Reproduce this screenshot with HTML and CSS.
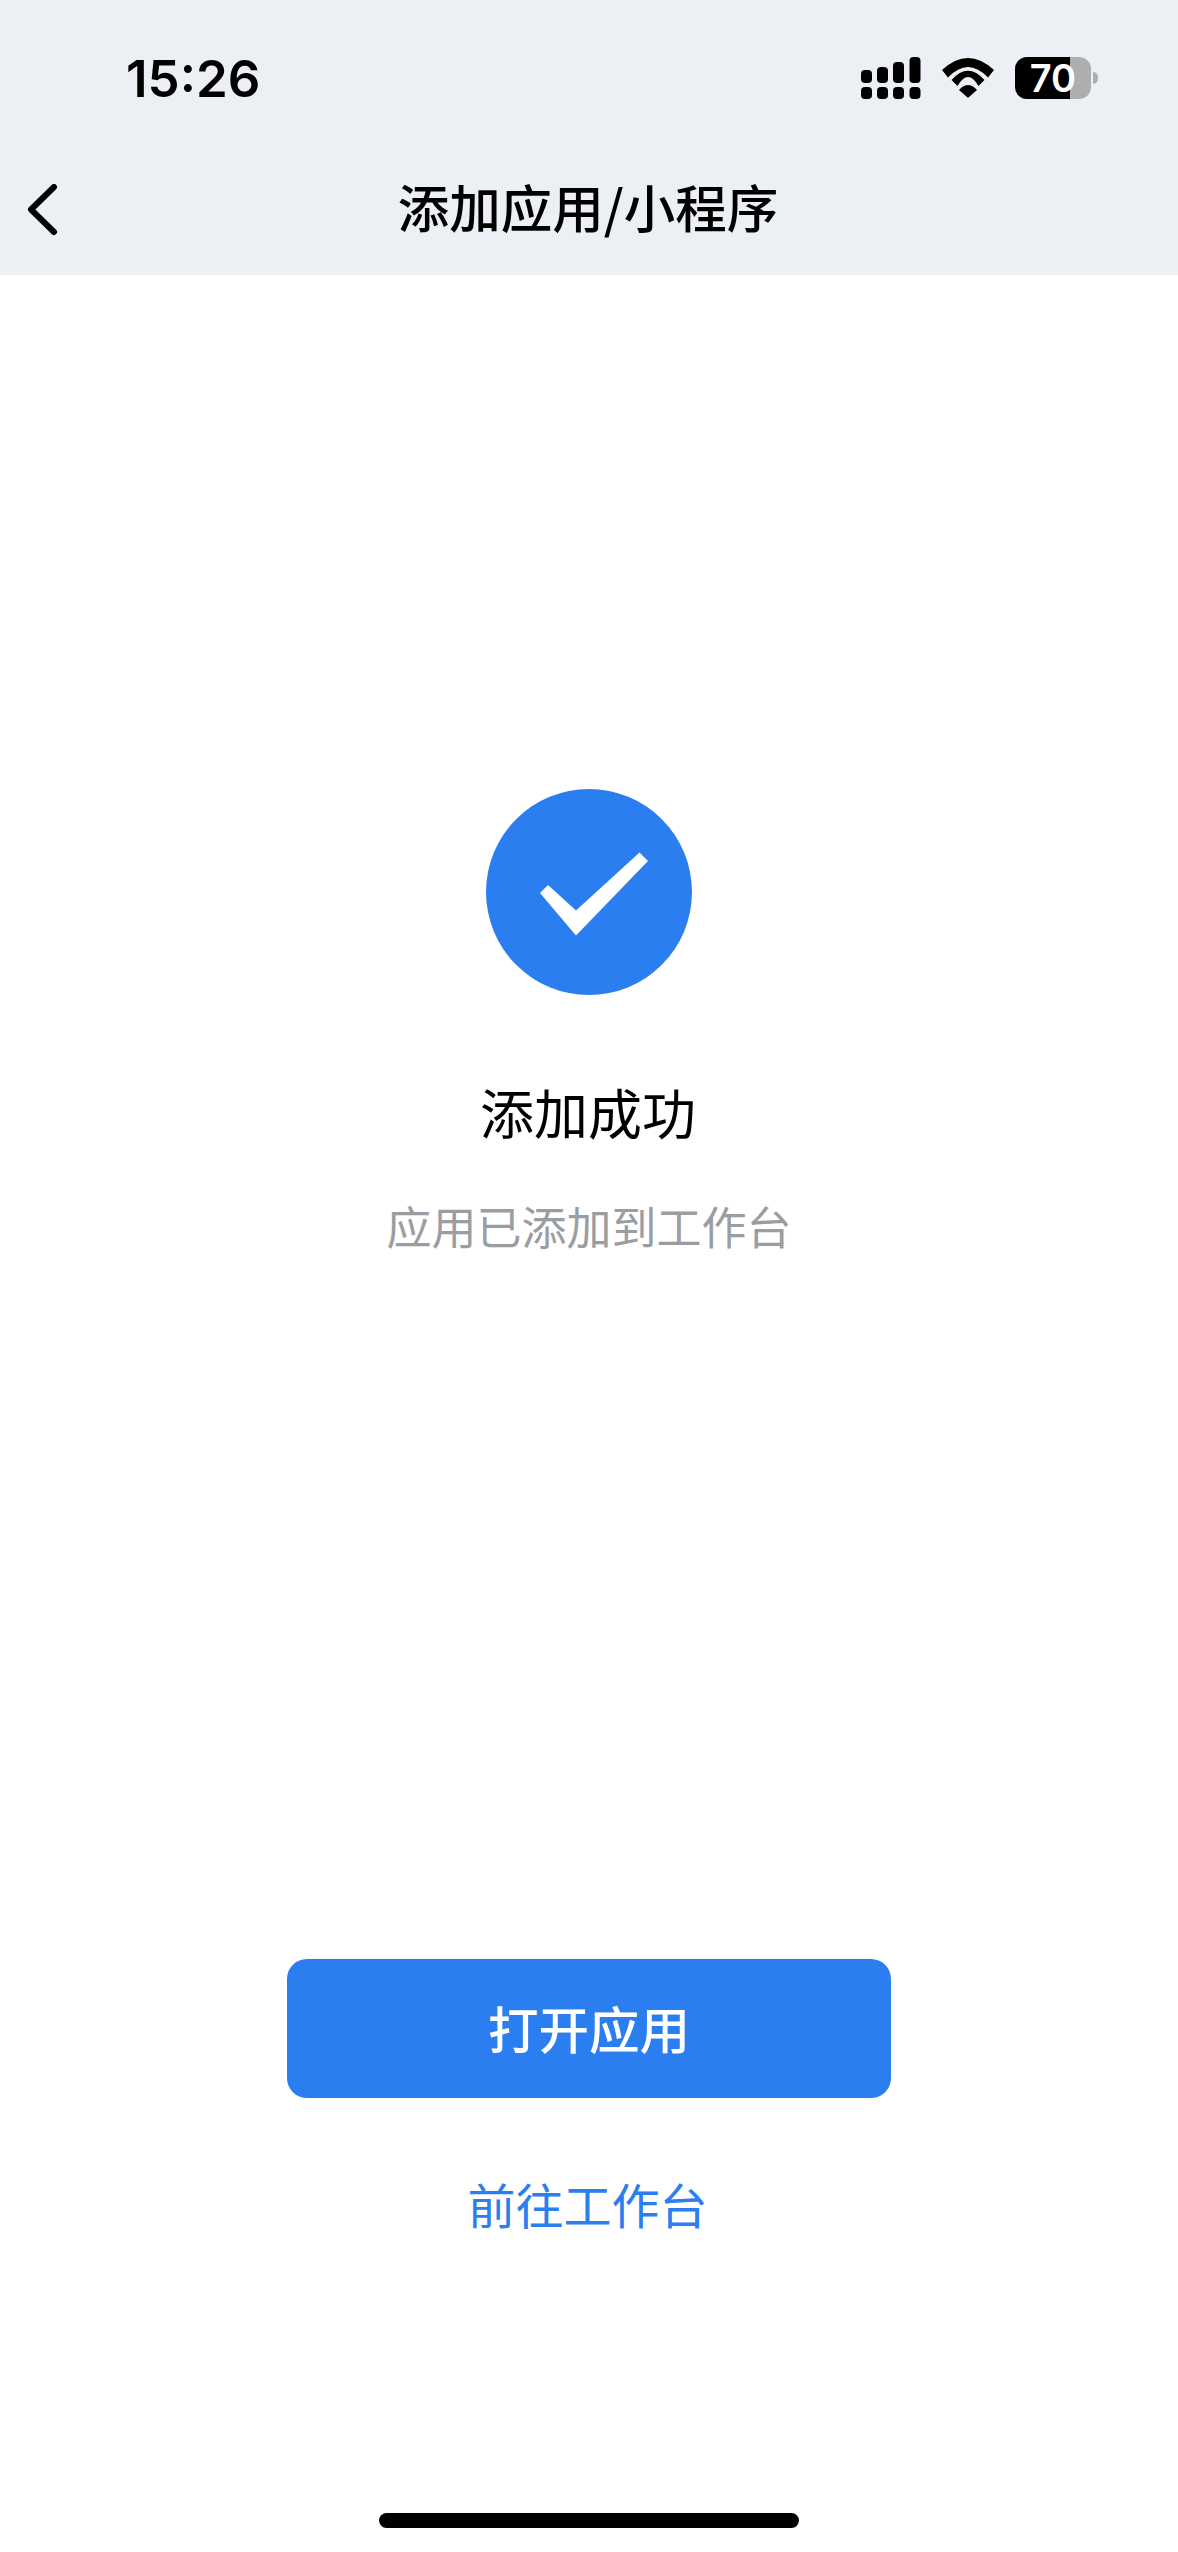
FILE: index.html
```html
<!DOCTYPE html>
<html lang="zh-CN">
<head>
    <meta charset="UTF-8">
    <meta name="viewport" content="width=device-width, initial-scale=1.0">
    <title>添加应用/小程序</title>
    <link rel="stylesheet" href="styles.css">
</head>
<body>
    <div class="page">
        <header class="header">
            <div class="status-bar">
                <span class="time">15:26</span>
                <div class="status-icons">
                    <svg class="signal" width="60" height="43" viewBox="0 0 60 43">
                        <rect x="0" y="13" width="11" height="13" rx="4"/>
                        <rect x="16" y="10" width="11" height="16" rx="4"/>
                        <rect x="32" y="5" width="11" height="21" rx="4"/>
                        <rect x="48.500" y="0" width="11" height="26" rx="4"/>
                        <rect x="0" y="30" width="11" height="12" rx="4"/>
                        <rect x="16" y="30" width="11" height="12" rx="4"/>
                        <rect x="32" y="30" width="11" height="12" rx="4"/>
                        <rect x="48.500" y="30" width="11" height="12" rx="4"/>
                    </svg>
                    <svg class="wifi" width="52" height="40" viewBox="0 0 52 40">
                        <path d="M0 12 Q26 -12 52 12 L46 19.500 Q26 -1.500 6 19.500 Z"/>
                        <path d="M9.500 22 Q26 3.500 42.500 22 L36.500 28 Q26 10 15.500 28 Z"/>
                        <path d="M17 32 Q26 22 35 32 L27 39 Q26 40 25 39 Z"/>
                    </svg>
                    <div class="battery">
                        <div class="battery-body">
                            <div class="battery-level"></div>
                            <span class="battery-text">70</span>
                        </div>
                        <div class="battery-nub"></div>
                    </div>
                </div>
            </div>
            <nav class="nav">
                <svg class="back" width="32" height="52" viewBox="0 0 32 52">
                    <path d="M27 3 L4 25.500 L27 48"/>
                </svg>
                <h1 class="nav-title">添加应用/小程序</h1>
            </nav>
        </header>

        <main class="content">
            <div class="success-icon">
                <svg width="206" height="206" viewBox="0 0 206 206">
                    <circle cx="103" cy="103" r="103" fill="#2a7ef0"/>
                    <polygon points="54,104 62,96 90,121.500 153.500,63.500 162,72 90,146.500" fill="#fff"/>
                </svg>
            </div>
            <h2 class="result-title">添加成功</h2>
            <p class="result-desc">应用已添加到工作台</p>
            <button class="open-btn">打开应用</button>
            <a class="link-btn">前往工作台</a>
            <div class="home-bar"></div>
        </main>
    </div>
</body>
</html>
```

FILE: styles.css
```css
body {
    margin: 0;
    background: #fff;
    font-family: "Noto Sans CJK SC", "Noto Sans", sans-serif;
    color: #000;
}

.page {
    display: flex;
    flex-direction: column;
    height: 2552px;
    overflow: hidden;
}

.header {
    height: 275px;
    background-color: #eceff4;
}

.status-bar {
    display: flex;
    align-items: center;
    justify-content: space-between;
    height: 156px;
    padding: 0 80px 0 126px;
}

.time {
    margin-top: 2px;
    font-family: Inter, sans-serif;
    font-size: 51px;
    font-weight: 600;
    line-height: 60px;
}

.status-icons {
    display: flex;
    align-items: center;
    gap: 21px;
}

.battery {
    display: flex;
    align-items: center;
    gap: 2px;
}

.battery-body {
    position: relative;
    display: flex;
    align-items: center;
    justify-content: center;
    width: 76px;
    height: 42px;
    border-radius: 12px;
    background-color: #aeaeb0;
}

.battery-level {
    position: absolute;
    left: 0;
    top: 0;
    bottom: 0;
    width: 55px;
    border-radius: 12px 0 0 12px;
    background-color: #000;
}

.battery-text {
    position: relative;
    font-family: Inter, sans-serif;
    font-size: 38px;
    font-weight: 600;
    color: #fff;
    line-height: 42px;
}

.battery-nub {
    width: 5px;
    height: 12px;
    border-radius: 0 6px 6px 0;
    background-color: #aeaeb0;
}

.nav {
    position: relative;
    display: flex;
    align-items: center;
    justify-content: center;
    height: 99px;
    padding-bottom: 6px;
}

.back {
    position: absolute;
    left: 27px;
    top: 28px;
    fill: none;
    stroke: #000;
    stroke-width: 6;
    stroke-linecap: round;
    stroke-linejoin: round;
}

.nav-title {
    margin: 0;
    padding-right: 2px;
    font-size: 51.500px;
    font-weight: 500;
    line-height: 70px;
}

.content {
    flex: 1;
    display: flex;
    flex-direction: column;
    align-items: center;
    padding-top: 514px;
}

.success-icon {
    width: 206px;
    height: 206px;
}

.success-icon svg {
    display: block;
}

.result-title {
    margin: 87px 0 0;
    padding-right: 2px;
    font-size: 54px;
    font-weight: 400;
    line-height: 60px;
}

.result-desc {
    margin: 59px 0 0;
    font-size: 45px;
    line-height: 50px;
    color: #9a9da2;
}

.open-btn {
    width: 604px;
    height: 139px;
    margin-top: 708px;
    padding: 0 0 4px;
    border: none;
    border-radius: 20px;
    background-color: #2a7ef0;
    color: #fff;
    font-family: inherit;
    font-size: 50.500px;
    font-weight: 500;
}

.link-btn {
    margin-top: 75px;
    padding-right: 3px;
    font-size: 48px;
    line-height: 60px;
    color: #2a7ef0;
}

.home-bar {
    width: 420px;
    height: 15px;
    margin-top: 280px;
    border-radius: 8px;
    background-color: #000;
}
```
